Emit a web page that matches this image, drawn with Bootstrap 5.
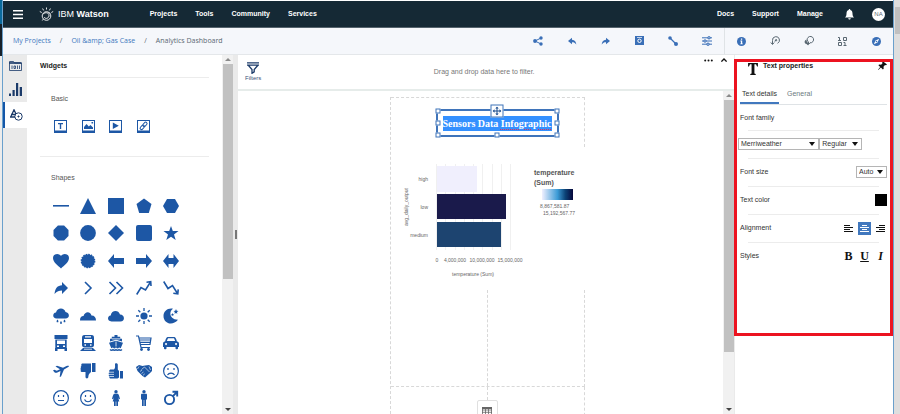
<!DOCTYPE html>
<html lang="en">
<head>
<meta charset="utf-8">
<meta name="viewport" content="width=device-width, initial-scale=1">
<title>Analytics Dashboard</title>
<link rel="stylesheet" href="https://cdn.jsdelivr.net/npm/bootstrap@5.3.0/dist/css/bootstrap.min.css">
<style>
  :root { --ink:#152935; --blue:#1d57a5; --tool:#3a6fb7; --rule:#ececec; }
  body { font:7px/10px "Liberation Sans", Arial, sans-serif; color:#323232; background:#fff; }
  button { border:0; background:none; padding:0; color:inherit; font:inherit; }
  svg { display:block; flex:none; }
  a { text-decoration:none; }
  h1, h2, h3 { font-size:7px; line-height:10px; margin:0; }
  .edge-left { width:2px; background:linear-gradient(#0a6a9c 0 24px, #16202a 24px 56px, #ececec 56px); }
  .edge-right { width:6px; background:#dedede; }
  .edge-right i { display:block; height:27px; margin:7px 0 0 1px; background:#c0c0c0; }
  .app-window { border-left:1px solid #6aa0cc; border-right:1px solid #6aa0cc; min-width:0; }
  .topbar { height:27px; margin-top:1px; background:var(--ink); color:#fff; padding:0 8px 0 10px; border-bottom:1px solid #55636d; }
  .topbar a { color:#fff; font-weight:700; }
  .brand { font-size:9px; margin-right:41px; }
  .brand span { font-weight:400; }
  .menu { gap:18px; }
  .avatar { width:13px; height:13px; border-radius:50%; background:#fff; color:#5a6872; font-size:6px; }
  .crumbs { height:27px; background:#f5f7fb; border-bottom:1px solid #e4e7ea; font-family:"Open Sans", sans-serif; }
  .crumbs ol { gap:9px; padding-left:10px; color:#5a6872; }
  .crumbs a { color:#4178be; }
  .tools { width:203px; color:var(--tool); }
  .tools-end { width:169px; border-left:1px solid #dfe3e6; }
  .tools button, .tools-end button { flex:1; display:flex; justify-content:center; }
  .grey { color:#5a6872; } .blue { color:var(--tool); }
  .rail { width:24px; background:#eaeaea; }
  .rail button { height:26px; width:24px; display:flex; align-items:center; justify-content:center; color:#1b3a69; }
  .rail button:first-child { height:21px; }
  .rail .on { background:#fff; border-left:2px solid #1557a8; }
  .widgets { width:195px; padding:6px 13px 0; overflow:hidden; }
  .widgets h2, .props h2 { font-weight:700; color:#222; }
  .widgets h3 { font-weight:400; color:#555; margin-left:11px; }
  .sect-basic { border-top:1px solid var(--rule); border-bottom:1px solid var(--rule); margin-top:6px; padding-top:16px; height:80px; }
  .tiles { display:grid; grid-template-columns:repeat(5,1fr); width:138px; margin-left:7px; color:var(--blue); justify-items:center; align-items:center; }
  .tiles svg { fill:currentColor; }
  .sect-basic .tiles { margin-top:16px; }
  .sect-shapes { padding-top:16px; }
  .sect-shapes .tiles { height:220px; margin-top:9px; grid-template-rows:repeat(8,1fr); }
  .ln { fill:none !important; stroke:currentColor; stroke-width:1.6; }
  .scroller { width:11px; background:#f1f1f1; padding:0 1px; display:flex; flex-direction:column; align-items:center; }
  .scroller::before, .scroller::after { content:""; border:3px solid transparent; border-top:0; border-bottom:3px solid #8a8a8a; margin:3px 0; }
  .scroller::after { border-top:3px solid #444; border-bottom:0; margin-top:auto; }
  .scroller i { width:10px; background:#c1c1c1; flex:0 0 60%; }
  .scroller.canvas-bar i { flex-basis:78%; }
  .splitter { width:5px; background:#eaeaea; display:flex; align-items:center; justify-content:center; }
  .splitter i { width:2px; height:9px; background:#777; }
  .filterbar { height:36px; border-bottom:2px solid #e6ecea; padding:0 7px; }
  .filterbar small { font-size:6px; line-height:8px; color:#3b4f78; }
  .hint { color:#777; padding-right:20px; }
  .filter-corner { top:0; right:7px; gap:8px; height:10px; }
  .stage { padding:6px 0 0 2px; overflow:hidden; }
  .canvas-bar { position:absolute; top:0; right:0; bottom:0; }
  .sheet { width:195px; border-left:1px dashed #d8d8d8; }
  .sheet-head { height:50px; border-top:1px dashed #d8d8d8; border-right:1px dashed #d8d8d8; padding:11px 0 0 45px; }
  .frame { width:123px; height:28px; border:2px solid #3f74ba; padding:5px 5px; }
  .frame mark { display:block; padding:0; background:#3390ff; color:#fff; font:bold 10px/15px "Liberation Serif", serif; white-space:nowrap; width:109px; height:15px; }
  .frame u { text-decoration:underline dotted #d6335c 1px; text-underline-offset:2px; }
  .grip { position:absolute; width:5px; height:5px; background:#fff; border:1px solid #3f74ba; transform:translate(-50%,-50%); }
  .mover { position:absolute; left:50%; top:0; width:13px; height:13px; background:#fff; border:1px solid #3f74ba; color:#1d4e8f; transform:translate(-50%,-50%); display:flex; align-items:center; justify-content:center; }
  .cells { height:97px; border-bottom:1px dashed #d8d8d8; border-right:1px dashed #d8d8d8; }
  .cells div + div { border-left:1px dashed #d8d8d8; }
  .tail { border-right:1px dashed #d8d8d8; }
  .stem { height:13px; border-left:1px dashed #d8d8d8; }
  .grid-btn { width:21px; height:21px; border:1px solid #e0e0e0; border-radius:2px; background:#fff; display:flex; align-items:center; justify-content:center; color:#666; }
  .props { width:159px; border-left:1px solid #eaeaea; padding:6px 6px 0 5px; }
  .props-head { padding:0 0 0 8px; gap:5px; height:26px; }
  .props-head svg { margin-top:2px; }
  .props-head button svg { margin-top:0; }
  .props .nav-tabs { border-bottom:1px solid #dfe3e6; gap:6px; }
  .props .nav-link { padding:2px 2px 3px; border:0; border-bottom:2px solid transparent; color:#6d7a80; margin:0; border-radius:0; }
  .props .nav-link.active { color:#333; border-bottom-color:#4178be; background:none; }
  .prop { height:28px; position:relative; }
  .prop.first { height:25px; }
  .prop + .prop::before { content:""; position:absolute; top:0; left:8px; right:8px; border-top:1px solid var(--rule); }
  .pick { position:relative; }
  .pick select { width:100%; height:12px; border:1px solid #b5b5b5; border-radius:0; background:#fff; appearance:none; font:inherit; color:#333; padding:0 2px; display:block; }
  .pick::after { content:""; position:absolute; right:4px; top:4px; border:3px solid transparent; border-top:4px solid #111; border-bottom:0; pointer-events:none; }
  .pick.wide { flex:80; } .pick.mid { flex:42; } .pick.tiny { width:31px; }
  .fonts { margin:0 25px 0 -2px; }
  .swatch { width:12px; height:12px; background:#000; }
  .trio { gap:3px; }
  .trio button { width:13px; height:13px; display:flex; align-items:center; justify-content:center; font:bold 12px/13px "Liberation Serif", serif; color:#111; }
  .trio .on { background:#4178be; color:#fff; }
  .callout-box { position:absolute; left:-1px; right:0; top:4px; height:277px; border:3px solid #ec1320; pointer-events:none; }
  .tick { font:5px "Liberation Sans", sans-serif; fill:#666; }
  .keyname { font:bold 7px "Liberation Sans", sans-serif; fill:#555; }
</style>
<script src="https://cdn.jsdelivr.net/npm/bootstrap@5.3.0/dist/js/bootstrap.bundle.min.js"></script>
</head>
<body class="vh-100 overflow-hidden d-flex">
<div class="edge-left flex-shrink-0"></div>
<div class="app-window flex-grow-1 d-flex flex-column">
  <header class="topbar d-flex align-items-center flex-shrink-0">
    <button aria-label="Menu"><svg width="10" height="9" viewBox="0 0 10 9" fill="#fff"><path d="M0 0h10v1.500H0zM0 3.700h10v1.500H0zM0 7.400h10v1.500H0z"/></svg></button>
    <a href="#" class="brand d-flex align-items-center ms-3"><svg class="me-1" width="15" height="15" viewBox="0 0 15 15" fill="none" stroke="#fff" stroke-width=".9"><circle cx="7.500" cy="9" r="4.300"/><path d="M4.200 7c2.500-2.500 6.500-1 5.800 2s-4 3-5 1M11 6.500 9.500 5M7.500.5v2M3.600 1.500l1 1.900M11.400 1.500l-1 1.900M.8 4.500l1.900 1M14.200 4.500l-1.900 1M4.500 12l-1.200 1.500"/></svg><span>IBM</span>&nbsp;Watson</a>
    <nav class="menu d-flex"><a href="#">Projects</a><a href="#">Tools</a><a href="#">Community</a><a href="#">Services</a></nav>
    <nav class="menu d-flex ms-auto align-items-center"><a href="#">Docs</a><a href="#">Support</a><a href="#">Manage</a>
      <button class="ms-1" aria-label="Notifications"><svg width="9" height="11" viewBox="0 0 9 11" fill="#fff"><path d="M4.500 0c.6 0 .8.400.8.900C7 1.300 7.500 2.800 7.500 4.500c0 2 .5 3 1.500 4H0c1-1 1.500-2 1.500-4 0-1.700.5-3.200 2.200-3.600 0-.5.200-.9.800-.9zM3.200 9.200h2.600c-.2 1.800-2.400 1.800-2.600 0z"/></svg></button>
      <button class="avatar" aria-label="Account NA">NA</button></nav>
  </header>

  <div class="crumbs d-flex align-items-center flex-shrink-0">
    <nav aria-label="Breadcrumb" class="me-auto"><ol class="d-flex list-unstyled m-0"><li><a href="#">My Projects</a></li><li>/</li><li><a href="#">Oil &amp;amp; Gas Case</a></li><li>/</li><li>Analytics Dashboard</li></ol></nav>
    <div class="tools d-flex">
      <button aria-label="Share"><svg width="10" height="10" viewBox="0 0 10 10" fill="currentColor"><path d="M2 5 8 2M2 5l6 3" stroke="currentColor"/><circle cx="2" cy="5" r="1.900"/><circle cx="8" cy="2" r="1.700"/><circle cx="8" cy="8" r="1.700"/></svg></button>
      <button aria-label="Undo"><svg width="10" height="10" viewBox="0 0 10 10" fill="currentColor"><path d="M1 5l4-3.200v2C8 4 9 6 9.300 8.500 8 6.800 7 6.300 5 6.300v2z"/></svg></button>
      <button aria-label="Redo"><svg width="10" height="10" viewBox="0 0 10 10" fill="currentColor"><path d="M9 5 5 1.800v2C2 4 1 6 .7 8.500 2 6.800 3 6.300 5 6.300v2z"/></svg></button>
      <button aria-label="Save"><svg width="9" height="9" viewBox="0 0 9 9"><path fill="currentColor" d="M0 0h9v9H0z"/><path fill="#fff" d="M2 1h5v.7H2z"/><circle cx="4.500" cy="4.800" r="1.700" fill="none" stroke="#fff"/></svg></button>
      <button aria-label="Connect"><svg width="10" height="10" viewBox="0 0 10 10" fill="currentColor"><path d="M2 2l6 6" stroke="currentColor" stroke-width="1.200"/><circle cx="2" cy="2" r="1.800"/><circle cx="8" cy="8" r="2"/></svg></button>
      <button aria-label="Settings"><svg width="10" height="10" viewBox="0 0 10 10" fill="none" stroke="currentColor"><path d="M0 1.800h10M0 5h10M0 8.200h10"/><path fill="#fff" d="M6 .8h2v2H6zM2 4h2v2H2zM5 7.200h2v2H5z"/></svg></button>
    </div>
    <div class="tools-end d-flex h-100 align-items-center">
      <button class="blue" aria-label="Information"><svg width="9" height="9" viewBox="0 0 9 9"><circle cx="4.500" cy="4.500" r="4.500" fill="currentColor"/><path fill="#fff" d="M3.900 1.500h1.300v1.300H3.900zM3.400 3.600h1.800v2.800h.6v.8H3.300v-.8h.6v-2h-.5z"/></svg></button>
      <button class="grey" aria-label="History"><svg width="10" height="10" viewBox="0 0 10 10" fill="none" stroke="currentColor" stroke-width="1"><path d="M2.500 8V4.500a3.500 3.500 0 1 1 5 2.800M.8 6.500l1.700 2 1.700-2M4.800 5.500l1.700-2"/><circle cx="6" cy="4.300" r=".7"/></svg></button>
      <button class="grey" aria-label="Comments"><svg width="10" height="10" viewBox="0 0 10 10"><path d="M4 1.500a3.200 3.200 0 1 1 2 5.300L4.500 8.500V6A3 3 0 0 1 4 1.500z" fill="none" stroke="currentColor"/><path d="M2.500 3.500C0 4.500 0 7.500 2.500 8l1.700 1.500V7C3 6.300 2.400 5 2.500 3.500z" fill="currentColor"/></svg></button>
      <button class="grey" aria-label="Data"><svg width="9" height="9" viewBox="0 0 9 9" fill="none" stroke="currentColor"><path d="M0 .5h1.500v3M0 3.500h3M5.500.5h3v3h-3zM.5 5.500h3v3h-3zM5.500 5.500H7v3M5.500 8.500h3"/></svg></button>
      <button class="blue" aria-label="Explore"><svg width="9" height="9" viewBox="0 0 9 9"><circle cx="4.500" cy="4.500" r="4.500" fill="currentColor"/><path d="M7.200 1.800 5.500 5.500 1.800 7.200l1.700-3.700z" fill="#fff"/><circle cx="4.500" cy="4.500" r=".8" fill="currentColor"/></svg></button>
    </div>
  </div>

  <div class="d-flex flex-grow-1 overflow-hidden">
    <nav class="rail flex-shrink-0 d-flex flex-column" aria-label="Panels">
      <button aria-label="Data sources"><svg width="13" height="10" viewBox="0 0 13 10" fill="none" stroke="currentColor"><path d="M.5 9.500v-9h4l1 1.500h7v7.500z" stroke-width=".8"/><path d="M0 2h12.500" stroke-width="1.600"/><path d="M3 4.500v3.500M5 5h1.500v2.500H5zM8.500 4.500v3.500M10.500 4.500v3.500" stroke-width=".8"/></svg></button>
      <button aria-label="Visualizations"><svg width="13" height="13" viewBox="0 0 13 13" fill="currentColor"><path d="M0 10.500h2V13H0zM3.500 7h2.200v6H3.500zM7 0h2.200v13H7zM10.700 4H13v9h-2.300z"/></svg></button>
      <button class="on" aria-label="Widgets"><svg width="13" height="12" viewBox="0 0 13 12" fill="none" stroke="currentColor"><path d="M.7 8 4 .8 6 5M1 5.500h4.500M0 8h5" stroke-width="1.300"/><circle cx="8.500" cy="7.500" r="3.700"/><path d="M8.500 6.500v2M7.500 7.500h2"/></svg></button>
    </nav>

    <section class="widgets flex-shrink-0">
      <h2>Widgets</h2>
      <div class="sect-basic"><h3>Basic</h3>
        <div class="tiles">
          <button aria-label="Text"><svg width="13" height="13" viewBox="0 0 13 13"><path fill-rule="evenodd" d="M0 0h13v13H0zM1 1v9.500h11V1z"/><path d="M4 3h5v1.300H7.200V9H5.800V4.300H4z"/></svg></button>
          <button aria-label="Image"><svg width="13" height="13" viewBox="0 0 13 13"><path fill-rule="evenodd" d="M0 0h13v13H0zM1 1v9.500h11V1z"/><path d="M2 9V7l2.500-3 2.300 2.500L8.500 5 11 7.500V9zM9.500 2h1.600v1.600H9.500z"/></svg></button>
          <button aria-label="Media"><svg width="13" height="13" viewBox="0 0 13 13"><path fill-rule="evenodd" d="M0 0h13v13H0zM1 1v9.500h11V1z"/><path d="M3.800 2.500 9.800 5.700l-6 3.300z"/></svg></button>
          <button aria-label="Web link"><svg width="13" height="13" viewBox="0 0 13 13"><path fill-rule="evenodd" d="M0 0h13v13H0zM1 1v9.500h11V1z"/><g fill="none" stroke="currentColor" transform="rotate(-48 6.500 5.800)"><rect x="2" y="4.500" width="5" height="2.800" rx="1.400"/><rect x="6" y="4.500" width="5" height="2.800" rx="1.400"/></g></svg></button>
        </div>
      </div>
      <div class="sect-shapes"><h3>Shapes</h3>
        <div class="tiles">
          <button aria-label="Line"><svg width="16" height="16" viewBox="0 0 16 16"><path d="M0 7h16v1.600H0z"/></svg></button>
          <button aria-label="Triangle"><svg width="16" height="16" viewBox="0 0 16 16"><path d="M8 0l8 16H0z"/></svg></button>
          <button aria-label="Square"><svg width="16" height="16" viewBox="0 0 16 16"><path d="M0 0h16v16H0z"/></svg></button>
          <button aria-label="Pentagon"><svg width="16" height="16" viewBox="0 0 16 16"><path d="M8 .5l7.500 5.600L12.800 15H3.200L.5 6.100z"/></svg></button>
          <button aria-label="Hexagon"><svg width="16" height="16" viewBox="0 0 16 16"><path d="M4 1h8l4 7-4 7H4L0 8z"/></svg></button>

          <button aria-label="Octagon"><svg width="16" height="16" viewBox="0 0 16 16"><path d="M4.900.5h6.200l4.400 4.400v6.200l-4.400 4.400H4.900L.5 11.100V4.900z"/></svg></button>
          <button aria-label="Circle"><svg width="16" height="16" viewBox="0 0 16 16"><circle cx="8" cy="8" r="7.900"/></svg></button>
          <button aria-label="Diamond"><svg width="16" height="16" viewBox="0 0 16 16"><path d="M8 0l8 8-8 8-8-8z"/></svg></button>
          <button aria-label="Rounded square"><svg width="16" height="16" viewBox="0 0 16 16"><rect width="16" height="16" rx="2"/></svg></button>
          <button aria-label="Star"><svg width="16" height="16" viewBox="0 0 16 16"><path d="M8 1l1.800 5.100h5.700L11 9.400l1.700 5.600L8 11.700 3.300 15 5 9.400.5 6.100h5.700z"/></svg></button>

          <button aria-label="Heart"><svg width="16" height="16" viewBox="0 0 16 16"><path d="M8 15.500C5 12.300 0 9.500 0 5 0 .5 5.800-.5 8 3c2.200-3.500 8-2.500 8 2 0 4.500-5 7.300-8 10.500z"/></svg></button>
          <button aria-label="Seal"><svg width="16" height="16" viewBox="0 0 16 16"><circle cx="8" cy="8" r="6.600"/><circle cx="8" cy="8" r="6.700" fill="none" stroke="currentColor" stroke-width="1.300" stroke-dasharray="1.700 .930"/></svg></button>
          <button aria-label="Left arrow"><svg width="16" height="16" viewBox="0 0 16 16"><path d="M0 8l6-7v4h10v6H6v4z"/></svg></button>
          <button aria-label="Right arrow"><svg width="16" height="16" viewBox="0 0 16 16"><path d="M16 8l-6-7v4H0v6h10v4z"/></svg></button>
          <button aria-label="Double arrow"><svg width="16" height="16" viewBox="0 0 16 16"><path d="M0 8l5.500-7v4h5V1L16 8l-5.500 7v-4h-5v4z"/></svg></button>

          <button aria-label="Curved arrow"><svg width="16" height="16" viewBox="0 0 16 16"><path d="M1.500 14C2 8 4.500 5.500 9 5.200V2l6 6-6 6v-3.500c-3 0-5 .8-7.500 3.500z"/></svg></button>
          <button aria-label="Chevron"><svg class="ln" width="16" height="16" viewBox="0 0 16 16"><path d="M5 2l6 6-6 6"/></svg></button>
          <button aria-label="Double chevron"><svg class="ln" width="16" height="16" viewBox="0 0 16 16"><path d="M1.500 2l6 6-6 6M8.500 2l6 6-6 6"/></svg></button>
          <button aria-label="Trend up"><svg class="ln" width="16" height="16" viewBox="0 0 16 16"><path d="M.7 14.500 5 7.500 9.500 10l5-8M10.500 2.200 14.700 1.700 15 6"/></svg></button>
          <button aria-label="Trend down"><svg class="ln" width="16" height="16" viewBox="0 0 16 16"><path d="M.7 1.500 5 8.500 9.500 5.500l5 8M10.300 13.200l4.500.7.400-4.500"/></svg></button>

          <button aria-label="Rain"><svg width="16" height="16" viewBox="0 0 16 16"><path d="M3.500 10.500C-.5 10.500-1 5 3 4.500 4-.8 11.500-1 12.500 4c4.500.5 4.500 6.500 0 6.500zM4.500 11.500c1.300 1.500 1.200 2.800 0 2.800s-1.300-1.300 0-2.800zM8 13c1.300 1.500 1.200 2.900 0 2.900S6.700 14.500 8 13zM11.500 11.500c1.300 1.500 1.200 2.800 0 2.800s-1.300-1.300 0-2.800z"/></svg></button>
          <button aria-label="Small cloud"><svg width="16" height="16" viewBox="0 0 16 16"><path d="M0 12.500C0 9.500 1 8 3.500 8 5 3.500 10 3 11.500 7.500c3 0 4.500 2 4.500 5z"/></svg></button>
          <button aria-label="Cloud"><svg width="16" height="16" viewBox="0 0 16 16"><path d="M3.500 13.500C-.8 13.500-1.200 8 2.700 7.500 3.500 2 10.500 1.500 12 6.500c5 0 5.300 7 .5 7z"/></svg></button>
          <button aria-label="Sun"><svg width="16" height="16" viewBox="0 0 16 16"><circle cx="8" cy="8" r="3.600"/><path stroke="currentColor" stroke-width="1.300" d="M8 0v3M8 13v3M0 8h3M13 8h3M2.300 2.300l2 2M11.700 11.700l2 2M2.300 13.700l2-2M11.700 4.300l2-2"/></svg></button>
          <button aria-label="Moon"><svg width="16" height="16" viewBox="0 0 16 16"><path d="M10 .7C5.500 3.500 6.500 11.500 15 11.800 9.500 18.500.5 15.500.5 8 .5 3.500 4.500-.3 10 .7zM13 1l.7 1.700 1.800.3-1.500 1 .3 1.800L13 5l-1.500.8.300-1.800-1.300-1 1.800-.3zM9.500 5l.5 1 1 .3-.8.7.1 1-.8-.6-.9.500.2-1-.7-.7 1-.2z"/></svg></button>

          <button aria-label="Truck"><svg width="16" height="16" viewBox="0 0 16 16"><path fill-rule="evenodd" d="M1.500 0h13v4h-13zM2.300 4.500h11.400V13h.3v3h-2.500v-2h-7v2H2v-3h.3zM4 5.500V9h8V5.500zM4 10.500V12h2v-1.500zm6 0V12h2v-1.500z"/></svg></button>
          <button aria-label="Train"><svg width="16" height="16" viewBox="0 0 16 16"><path fill-rule="evenodd" d="M4.500 0h7c2 0 2.500 1 2.500 3v7c0 1.500-1 2.500-2.500 2.500h-7C3 12.500 2 11.500 2 10V3c0-2 .5-3 2.500-3zM5 1.300v1.200h6V1.300zM4 4v4h8V4zM4.500 9.300v1.500H6V9.300zm5.500 0v1.500h1.500V9.300z"/><path d="M3 13h10l3 3H0z"/><path stroke="#fff" stroke-width=".8" d="M4 14.200h8"/></svg></button>
          <button aria-label="Ship"><svg width="16" height="16" viewBox="0 0 16 16"><path d="M6.500 0h3v1.800h2.700v2H14v2.700l-6-1.700-6 1.700V3.800h1.800v-2h2.700z"/><path d="M8 5.700l7 2-2.300 5.500-1.500-.7-1.600.9-1.600-.9-1.600.9-1.600-.9-1.500.7L1 7.700z"/><path d="M4 3.900h8M8 6.500v5" stroke="#fff" stroke-width=".8"/><path d="M2 14.500c1 1 2 1 3 0 1 1 2 1 3 0 1 1 2 1 3 0 1 1 2 1 3 0" fill="none" stroke="currentColor" stroke-width="1.200"/></svg></button>
          <button aria-label="Cart"><svg width="16" height="16" viewBox="0 0 16 16"><path fill="none" stroke="currentColor" stroke-width="1.200" d="M0 1h2.500L5 12.500h9M3 3h12l-1 6.500H4.500M3.500 5h11M4 7.300h10"/><circle cx="5.500" cy="14.500" r="1.400"/><circle cx="12.500" cy="14.500" r="1.400"/></svg></button>
          <button aria-label="Car"><svg width="16" height="16" viewBox="0 0 16 16"><path fill-rule="evenodd" d="M4.500 2h7c1 0 2 2.500 2.300 4.200C15.500 6.700 16 7.500 16 9v3h-1v1.500c0 1-2.500 1-2.500 0V12h-9v1.500c0 1-2.500 1-2.500 0V12H0V9c0-1.500.5-2.300 2.200-2.800C2.500 4.500 3.500 2 4.500 2zm.5 1.300L3.800 6h8.400L11 3.300zM3 8a1 1 0 1 0 .1 0zm10 0a1 1 0 1 0 .1 0z"/></svg></button>

          <button aria-label="Plane"><svg width="16" height="16" viewBox="0 0 16 16"><path d="M0 7.500l1.300-.7 2.500 1 3.200-1.500L2.500 3.500 4 2.800l6 1.900 3.500-1.700c1.500-.7 2.800-.3 2.500.3s-1 1-2 1.500L11 6.400l-3 7-1.300.6.800-6-3.700 1.700c-1 .4-2 0-2.300-.4z"/></svg></button>
          <button aria-label="Thumbs down"><svg width="16" height="16" viewBox="0 0 16 16"><path d="M2 .5h9V9c-2 1.500-2.500 3-2.700 5 0 1.800-2.600 2-2.800 0V9H1.800C.5 9 .3 7.500 1 7 .3 6.500.3 5.300 1 5 .5 4 .8 3.200 1.500 3 1 2 1.300.8 2 .5zM12 0h3.500v9H12z"/></svg></button>
          <button aria-label="Thumbs up"><svg width="16" height="16" viewBox="0 0 16 16"><path d="M6 6.500C7.500 5 7 2.500 7 1c0-1.200 2.500-1.200 2.800.5V6.500L11 8v6.500L9.500 15.500H3c-1.500 0-2-1-1.500-2-1-.3-1-1.700-.3-2.200-.8-.5-.7-1.800.2-2.100C.7 7.500 1.500 6.500 3 6.500zM12 8h3v7.500h-3z"/><path d="M1 9.200h5M1 11.400h5M1.500 13.500H6" stroke="#fff" stroke-width=".7"/></svg></button>
          <button aria-label="Handshake"><svg width="16" height="16" viewBox="0 0 16 16"><path d="M0 4l3-2 3.500 1L9 2.500l4-.5 3 2v4l-2.500 2.500L9 14.500 6.500 13 1.500 8z"/><path d="M3 3.500 1.500 6M13 3.500 14.500 7M5.500 6.500l3-2.500 5 5M4 8.500l2-1.500M5.500 10.500l2-1.500M7 12.300l1.800-1.500" stroke="#fff" stroke-width=".6" fill="none"/></svg></button>
          <button aria-label="Sad face"><svg class="ln" width="16" height="16" viewBox="0 0 16 16"><circle cx="8" cy="8" r="7.400" stroke-width="1.200"/><path d="M5 5v2M11 5v2M4.500 12c1.500-2.500 5.500-2.500 7 0" stroke-width="1.200"/></svg></button>

          <button aria-label="Neutral face"><svg class="ln" width="16" height="16" viewBox="0 0 16 16"><circle cx="8" cy="8" r="7.400" stroke-width="1.200"/><path d="M5.500 5v2M10.500 5v2M5 10.500h6" stroke-width="1.200"/></svg></button>
          <button aria-label="Happy face"><svg class="ln" width="16" height="16" viewBox="0 0 16 16"><circle cx="8" cy="8" r="7.400" stroke-width="1.200"/><path d="M5.500 5v2M10.500 5v2M4.500 9.500c1.500 3 5.500 3 7 0" stroke-width="1.200"/></svg></button>
          <button aria-label="Woman"><svg width="16" height="16" viewBox="0 0 16 16"><circle cx="8" cy="1.700" r="1.700"/><path d="M6 3.700h4c1 1 1.500 3.500 2 5l-1 .5-1-2 1.300 4.300H10V16H8.300v-4.500h-.6V16H6v-4.500H4.700L6 7.200l-1 2-1-.5c.5-1.500 1-4 2-5z"/></svg></button>
          <button aria-label="Man"><svg width="16" height="16" viewBox="0 0 16 16"><circle cx="8" cy="1.700" r="1.700"/><path d="M6 3.700h4c.7 0 1 .5 1 1V9.500h-1V16H8.300v-6h-.6v6H6V9.500H5V4.700c0-.5.300-1 1-1z"/></svg></button>
          <button aria-label="Male symbol"><svg class="ln" width="16" height="16" viewBox="0 0 16 16"><circle cx="6.500" cy="9.500" r="4.600" stroke-width="1.900"/><path d="M9.700 6.300 14 2M9.500 1.800h4.700v4.700" stroke-width="1.900"/></svg></button>
        </div>
      </div>
    </section>
    <div class="scroller flex-shrink-0"><i></i></div>
    <div class="splitter flex-shrink-0"><i></i></div>

    <main class="flex-grow-1 d-flex flex-column overflow-hidden">
      <div class="filterbar position-relative d-flex align-items-center flex-shrink-0">
        <button class="d-flex flex-column align-items-center"><svg width="12" height="12" viewBox="0 0 12 12" fill="none" stroke="#1b3a69" stroke-width="1.300"><path d="M0 .8h12M0 3.200h12M1.500 3.500 5 7.500v3.800l2.200-1.500V7.500l3.500-4"/></svg><small>Filters</small></button>
        <span class="hint flex-grow-1 text-center">Drag and drop data here to filter.</span>
        <div class="filter-corner position-absolute d-flex align-items-center">
          <button aria-label="More"><svg width="9" height="3" viewBox="0 0 9 3" fill="#111"><circle cx="1.200" cy="1.500" r="1"/><circle cx="4.500" cy="1.500" r="1"/><circle cx="7.800" cy="1.500" r="1"/></svg></button>
          <button aria-label="Collapse"><svg width="6" height="4" viewBox="0 0 6 4" fill="none" stroke="#111" stroke-width="1.300"><path d="M.4 3.600 3 1l2.600 2.600"/></svg></button>
        </div>
      </div>
      <div class="stage position-relative flex-grow-1 d-flex justify-content-center">
        <article class="sheet d-flex flex-column">
          <div class="sheet-head flex-shrink-0">
            <div class="frame position-relative">
              <mark>Sensors Data <u>Infographic</u></mark>
              <i class="grip top-0 start-0"></i><i class="grip top-0 start-100"></i><i class="grip top-50 start-0"></i><i class="grip top-50 start-100"></i><i class="grip top-100 start-0"></i><i class="grip top-100 start-50"></i><i class="grip top-100 start-100"></i>
              <button class="mover" aria-label="Move"><svg width="9" height="9" viewBox="0 0 9 9" fill="currentColor"><path d="M4 1.500h1V4h2.500v1H5v2.500H4V5H1.500V4H4zM4.500 0l1.700 2H2.800zM4.500 9 2.800 7h3.400zM0 4.500l2-1.700v3.400zM9 4.500 7 6.200V2.800z"/></svg></button>
            </div>
          </div>
          <svg width="194" height="143" viewBox="0 0 194 143" role="img" aria-label="temperature (Sum) by avg_daily_output">
            <defs><linearGradient id="heat"><stop offset="0" stop-color="#f0f0ff"/><stop offset=".5" stop-color="#3c9bd6"/><stop offset=".75" stop-color="#0b4377"/><stop offset="1" stop-color="#06063a"/></linearGradient></defs>
            <path d="M45.500 17v86M54.500 17v86M64.500 17v86M73.500 17v86M82.500 17v86M91.500 17v86M101.500 17v86M110.500 17v86M119.500 17v86" stroke="#f0f0f0"/>
            <path fill="#f0effd" d="M46 19h40v26H46z"/><path fill="#1a1a4b" d="M46 47h69v25H46z"/><path fill="#1d4470" d="M46 75h64v25H46z"/>
            <g class="tick" text-anchor="end"><text x="37" y="34">high</text><text x="37" y="62">low</text><text x="37" y="90">medium</text></g>
            <g class="tick" text-anchor="middle"><text x="46" y="115">0</text><text x="64" y="115">4,000,000</text><text x="91" y="115">10,000,000</text><text x="119" y="115">15,000,000</text><text x="82" y="129">temperature (Sum)</text><text transform="translate(17 60) rotate(-90)">avg_daily_output</text></g>
            <g class="keyname"><text x="143" y="28">temperature</text><text x="143" y="38">(Sum)</text></g>
            <path fill="url(#heat)" d="M151 42h31v11h-31z"/>
            <g class="tick"><text x="149" y="61">8,867,581.87</text><text x="152" y="68">15,192,567.77</text></g>
          </svg>
          <div class="cells d-flex flex-shrink-0"><div class="w-50"></div><div class="w-50"></div></div>
          <div class="tail flex-grow-1 d-flex flex-column align-items-center"><div class="stem flex-shrink-0"></div><button class="grid-btn flex-shrink-0" aria-label="Add table"><svg width="10" height="8" viewBox="0 0 10 8" fill="none" stroke="currentColor"><path d="M.5.5h9v7h-9zM0 3h10M0 5.300h10M3.500 1v7M6.500 1v7" stroke-width=".8"/><path d="M0 1h10" stroke-width="2"/></svg></button></div>
        </article>
        <div class="scroller canvas-bar"><i></i></div>
      </div>
    </main>

    <aside class="props position-relative flex-shrink-0">
      <div class="props-head d-flex align-items-start">
        <svg width="10" height="12" viewBox="0 0 9 11" fill="#111"><path d="M0 0h9v3.200h-.8L7.300 1.200H5.800v8.400l1.200.5v.9H2v-.9l1.200-.5V1.200H1.700L.8 3.200H0z"/></svg>
        <h2>Text properties</h2>
        <button class="ms-auto" aria-label="Pin"><svg width="9" height="9" viewBox="0 0 9 9" fill="#111"><path d="M4.500 0 9 3.500 8 4.300l-1-.2-1.500 1.700.2 2-.8.700-2-2L.3 9 0 8.700l2.200-2.600L.4 4.300l.7-.8 2 .2L4.700 2 3.800.8z"/></svg></button>
      </div>
      <div class="nav nav-tabs" role="tablist"><button class="nav-link active" role="tab" aria-selected="true">Text details</button><button class="nav-link" role="tab" aria-selected="false">General</button></div>
      <div class="prop first d-flex align-items-center"><label for="family">Font family</label></div>
      <div class="prop d-flex align-items-center"><div class="fonts d-flex flex-grow-1"><div class="pick wide"><select id="family"><option>Merriweather</option></select></div><div class="pick mid"><select aria-label="Font weight"><option>Regular</option></select></div></div></div>
      <div class="prop d-flex align-items-center justify-content-between"><label for="size">Font size</label><div class="pick tiny"><select id="size"><option>Auto</option></select></div></div>
      <div class="prop d-flex align-items-center justify-content-between"><span>Text color</span><button class="swatch" aria-label="Text color black"></button></div>
      <div class="prop d-flex align-items-center justify-content-between"><span>Alignment</span><div class="trio d-flex">
        <button aria-label="Align left"><svg width="9" height="9" viewBox="0 0 9 9" stroke="currentColor"><path d="M0 1.500h6M0 3.500h9M0 5.500h6M0 7.500h9"/></svg></button>
        <button class="on" aria-label="Align center"><svg width="9" height="9" viewBox="0 0 9 9" stroke="currentColor"><path d="M2 1.500h5M0 3.500h9M2 5.500h5M0 7.500h9"/></svg></button>
        <button aria-label="Align right"><svg width="9" height="9" viewBox="0 0 9 9" stroke="currentColor"><path d="M3 1.500h6M0 3.500h9M3 5.500h6M0 7.500h9"/></svg></button></div></div>
      <div class="prop d-flex align-items-center justify-content-between"><span>Styles</span><div class="trio d-flex"><button aria-label="Bold">B</button><button class="text-decoration-underline" aria-label="Underline">U</button><button class="fst-italic" aria-label="Italic">I</button></div></div>
      <div class="callout-box"></div>
    </aside>
  </div>
</div>
<div class="edge-right flex-shrink-0"><i></i></div>
</body>
</html>
